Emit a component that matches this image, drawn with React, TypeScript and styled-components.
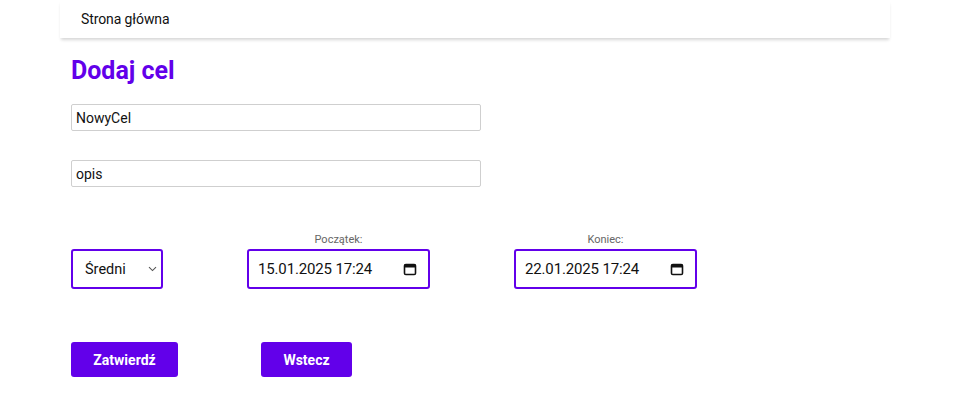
import React from "react";
import styled, { createGlobalStyle } from "styled-components";

const Global = createGlobalStyle`
  html, body { margin: 0; padding: 0; background: #fff; }
  body { font-family: Roboto, "Noto Sans", Arial, sans-serif; color: #000; }
  * { box-sizing: border-box; }
`;

const Page = styled.div`
  width: 978px;
  height: 409px;
  display: flex;
  flex-direction: column;
`;

const NavBar = styled.nav`
  margin-left: 60px;
  width: 830px;
  height: 38px;
  display: flex;
  align-items: center;
  padding-left: 21px;
  background: #fff;
  box-shadow: 0 3px 3px -1px rgba(0, 0, 0, 0.16);
`;

const NavLink = styled.a`
  font-size: 14px;
  color: #111;
  text-decoration: none;
  letter-spacing: -0.1px;
`;

const Content = styled.main`
  padding-left: 71px;
  display: flex;
  flex-direction: column;
  align-items: flex-start;
`;

const Title = styled.h1`
  margin: 17px 0 0 0;
  font-size: 25px;
  font-weight: 700;
  line-height: 32px;
  color: #6200ea;
`;

const TextField = styled.input<{ $top: number }>`
  margin-top: ${(p) => p.$top}px;
  width: 410px;
  height: 27px;
  border: 1px solid #cfcfcf;
  border-radius: 2px;
  padding: 0 4px;
  font-family: Roboto, Arial, sans-serif;
  font-size: 14px;
  color: #111;
  outline: none;
`;

const OptionsRow = styled.div`
  margin-top: 46px;
  display: flex;
  align-items: flex-end;
  gap: 84px;
`;

const chevron = `url("data:image/svg+xml,%3Csvg xmlns='http://www.w3.org/2000/svg' width='9' height='6' viewBox='0 0 9 6'%3E%3Cpath d='M1 1.2 L4.5 4.6 L8 1.2' fill='none' stroke='%23555' stroke-width='1.1'/%3E%3C/svg%3E")`;

const Select = styled.select`
  appearance: none;
  width: 92px;
  height: 40px;
  border: 2px solid #6200ea;
  border-radius: 3px;
  padding: 0 8px 0 12px;
  font-family: Roboto, Arial, sans-serif;
  font-size: 14.5px;
  color: #111;
  background: #fff ${chevron} no-repeat right 4px center;
  outline: none;
`;

const DateGroup = styled.div`
  display: flex;
  flex-direction: column;
  align-items: center;
  gap: 3px;
`;

const DateLabel = styled.label`
  font-size: 11px;
  color: #666;
  line-height: 13px;
`;

const DateBox = styled.div`
  width: 183px;
  height: 40px;
  border: 2px solid #6200ea;
  border-radius: 3px;
  display: flex;
  align-items: center;
  justify-content: space-between;
  padding: 0 11px 0 9px;
  font-size: 15px;
  color: #111;
  letter-spacing: -0.15px;
`;

const ButtonRow = styled.div`
  margin-top: 53px;
  display: flex;
  gap: 83px;
`;

const Button = styled.button<{ $w: number }>`
  width: ${(p) => p.$w}px;
  height: 35px;
  border: none;
  border-radius: 3px;
  background: #6200ea;
  color: #fff;
  font-family: Roboto, Arial, sans-serif;
  font-size: 14px;
  font-weight: 700;
  cursor: pointer;
`;

const CalendarIcon = () => (
  <svg width="14" height="14" viewBox="0 0 14 14" fill="none">
    <rect x="1.5" y="2.5" width="11" height="10" rx="1.3" stroke="#111" strokeWidth="1.6" />
    <rect x="1.5" y="2.5" width="11" height="3" fill="#111" />
  </svg>
);

export default function App() {
  return (
    <Page>
      <Global />
      <NavBar>
        <NavLink href="#">Strona główna</NavLink>
      </NavBar>
      <Content>
        <Title>Dodaj cel</Title>
        <TextField $top={17} defaultValue="NowyCel" />
        <TextField $top={29} defaultValue="opis" />
        <OptionsRow>
          <Select defaultValue="sredni">
            <option value="niski">Niski</option>
            <option value="sredni">Średni</option>
            <option value="wysoki">Wysoki</option>
          </Select>
          <DateGroup>
            <DateLabel>Początek:</DateLabel>
            <DateBox>
              <span>15.01.2025 17:24</span>
              <CalendarIcon />
            </DateBox>
          </DateGroup>
          <DateGroup>
            <DateLabel>Koniec:</DateLabel>
            <DateBox>
              <span>22.01.2025 17:24</span>
              <CalendarIcon />
            </DateBox>
          </DateGroup>
        </OptionsRow>
        <ButtonRow>
          <Button $w={107}>Zatwierdź</Button>
          <Button $w={91}>Wstecz</Button>
        </ButtonRow>
      </Content>
    </Page>
  );
}
